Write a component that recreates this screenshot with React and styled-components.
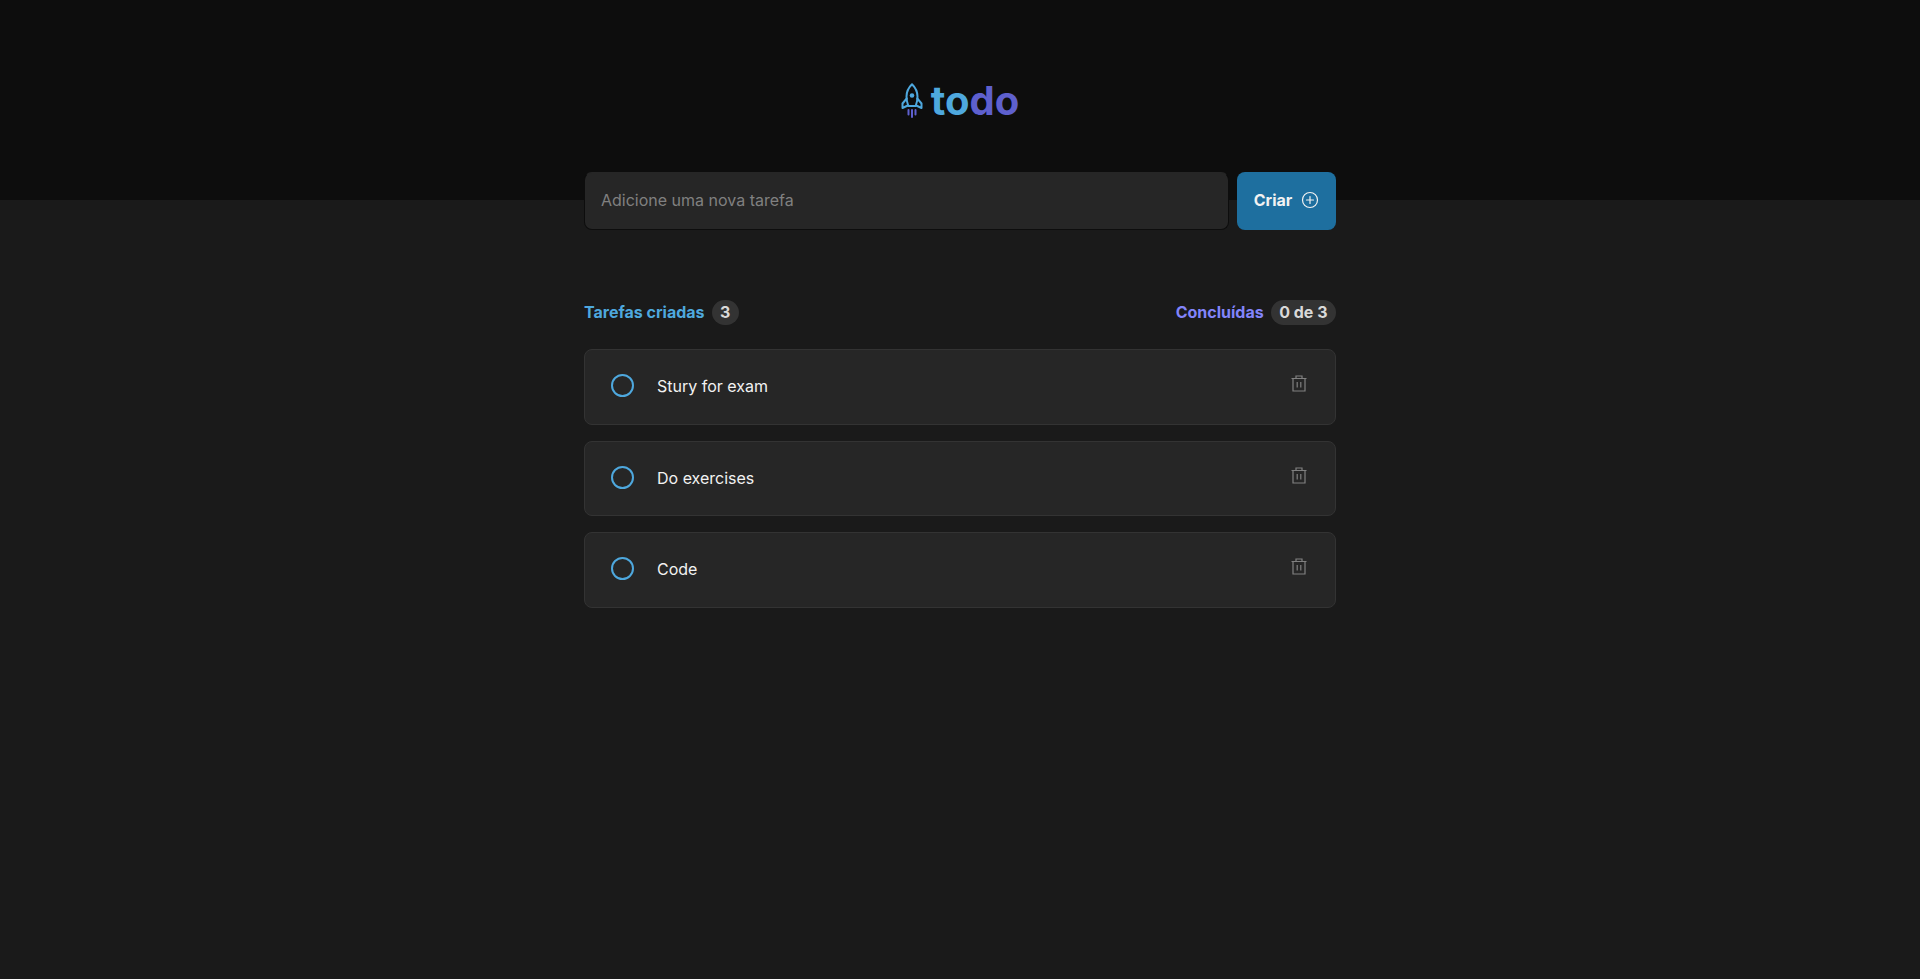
import { useState } from "react";
import styled, { createGlobalStyle } from "styled-components";

const tasks = [
  { id: 1, title: "Stury for exam" },
  { id: 2, title: "Do exercises" },
  { id: 3, title: "Code" },
];

const App = () => {
  const [items] = useState(tasks);

  return (
    <>
      <GlobalStyle />
      <Header>
        <Logo>
          <svg width="22" height="35" viewBox="0 0 22 35" fill="none" stroke="#4ea8de" strokeWidth="2" strokeLinejoin="round" strokeLinecap="round">
            <path d="M11 1.200C7.300 4.800 5.500 9 5.500 13.500c0 3.500.7 6.500 1.800 9.500h7.400c1.100-3 1.800-6 1.800-9.500C16.500 9 14.700 4.800 11 1.200z" />
            <path d="M5.700 15.500L1.500 20.500v4.500l5.300-2.500M16.300 15.500l4.200 5v4.500l-5.300-2.500" />
            <circle cx="11" cy="12.500" r="2.300" fill="#4ea8de" stroke="none" />
            <path d="M11 27v7M7.500 27v4.500M14.500 27v4.500" stroke="#5e60ce" />
          </svg>
          <LogoText>
            <span>to</span>
            <span>do</span>
          </LogoText>
        </Logo>
      </Header>
      <Main>
        <NewTask>
          <TaskInput placeholder="Adicione uma nova tarefa" />
          <CreateButton>
            Criar
            <svg width="18" height="18" viewBox="0 0 18 18" fill="none" stroke="#f2f2f2" strokeWidth="1.200" strokeLinecap="round">
              <circle cx="9" cy="9" r="7.500" />
              <path d="M9 5.500v7M5.500 9h7" />
            </svg>
          </CreateButton>
        </NewTask>
        <Summary>
          <Counter>
            <CounterLabel $color="#4ea8de">Tarefas criadas</CounterLabel>
            <Badge>3</Badge>
          </Counter>
          <Counter>
            <CounterLabel $color="#8284fa">Concluídas</CounterLabel>
            <Badge>0 de 3</Badge>
          </Counter>
        </Summary>
        <TaskList>
          {items.map((task) => (
            <TaskRow key={task.id}>
              <Check />
              <TaskTitle>{task.title}</TaskTitle>
              <DeleteButton aria-label="Excluir">
                <svg width="16" height="18" viewBox="0 0 16 18" fill="none" stroke="#808080" strokeWidth="1.200">
                  <path d="M.5 4.500h15M2 4.500v12.500h12V4.500M5 4.500V2h6v2.500M6.200 8v5.500M9.800 8v5.500" />
                </svg>
              </DeleteButton>
            </TaskRow>
          ))}
        </TaskList>
      </Main>
    </>
  );
};

const GlobalStyle = createGlobalStyle`
  * {
    margin: 0;
    padding: 0;
    box-sizing: border-box;
  }
  body {
    background: #1a1a1a;
    color: #f2f2f2;
    font-family: Inter, "Noto Sans", sans-serif;
    font-size: 16px;
    -webkit-font-smoothing: antialiased;
  }
`;

const Header = styled.header`
  height: 200px;
  background: #0d0d0d;
  display: flex;
  justify-content: center;
  padding-top: 79px;
`;

const Logo = styled.div`
  display: flex;
  align-items: flex-start;
  gap: 8px;
  height: 44px;
  svg {
    margin-top: 4px;
  }
`;

const LogoText = styled.h1`
  font-size: 40px;
  font-weight: 700;
  line-height: 44px;
  color: #4ea8de;
  span + span {
    color: #5e60ce;
  }
`;

const Main = styled.main`
  width: 752px;
  margin: -28px auto 0;
`;

const NewTask = styled.form`
  display: flex;
  gap: 8px;
  height: 58px;
`;

const TaskInput = styled.input`
  flex: 1;
  background: #262626;
  border: 1px solid #0d0d0d;
  border-top-color: #262626;
  border-radius: 8px;
  padding: 0 16px 2px;
  color: #f2f2f2;
  font-family: inherit;
  font-size: 16px;
  outline: none;
  &::placeholder {
    color: #808080;
  }
`;

const CreateButton = styled.button`
  width: 99px;
  display: flex;
  align-items: center;
  justify-content: center;
  gap: 9px;
  padding-bottom: 2px;
  background: #1e6f9f;
  border: none;
  border-radius: 8px;
  color: #f2f2f2;
  font-family: inherit;
  font-size: 16px;
  font-weight: 700;
`;

const Summary = styled.div`
  display: flex;
  justify-content: space-between;
  align-items: center;
  margin-top: 70px;
  height: 24px;
`;

const Counter = styled.div`
  display: flex;
  align-items: center;
  gap: 7px;
`;

const CounterLabel = styled.strong`
  font-size: 16px;
  font-weight: 700;
  color: ${(p) => p.$color};
`;

const Badge = styled.span`
  min-width: 27px;
  height: 25px;
  padding: 0 8.5px;
  display: flex;
  align-items: center;
  justify-content: center;
  background: #333333;
  border-radius: 999px;
  font-size: 16px;
  font-weight: 700;
  color: #d9d9d9;
`;

const TaskList = styled.ul`
  list-style: none;
  display: flex;
  flex-direction: column;
  gap: 16px;
  margin-top: 25px;
`;

const TaskRow = styled.li`
  height: 75.6px;
  display: flex;
  align-items: center;
  background: #262626;
  border: 1px solid #333333;
  border-radius: 8px;
  padding: 0 26px 1.6px;
`;

const Check = styled.span`
  width: 23px;
  height: 23px;
  margin-bottom: 1px;
  border: 2px solid #4ea8de;
  border-radius: 50%;
  flex-shrink: 0;
`;

const TaskTitle = styled.p`
  flex: 1;
  margin-left: 23px;
  font-size: 16px;
  color: #f2f2f2;
`;

const DeleteButton = styled.button`
  display: flex;
  align-self: flex-start;
  margin: 24px 2px 0 0;
  background: none;
  border: none;
`;

export default App;
